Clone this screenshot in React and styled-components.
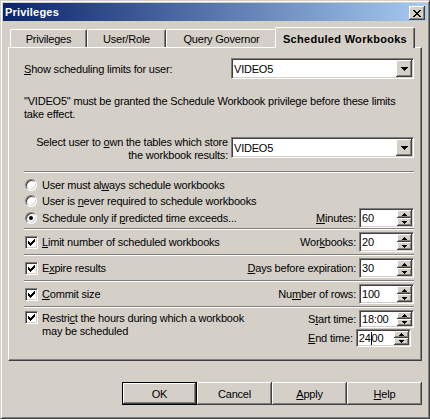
import React from "react";
import styled, { createGlobalStyle, css } from "styled-components";

const Global = createGlobalStyle`
  html, body { margin: 0; padding: 0; background: #d4d0c8; }
  body {
    font-family: "Liberation Sans", Arial, sans-serif;
    font-size: 11px;
    color: #000;
    letter-spacing: -0.2px;
  }
  * { box-sizing: border-box; }
  u { text-underline-offset: 1px; }
`;

const raised = css`
  background: #d4d0c8;
  box-shadow: inset -1px -1px #404040, inset 1px 1px #ffffff,
    inset -2px -2px #808080, inset 2px 2px #d4d0c8;
`;

const sunken = css`
  border: 1px solid;
  border-color: #808080 #ffffff #ffffff #808080;
  box-shadow: inset 1px 1px #404040, inset -1px -1px #d4d0c8;
`;

const Window = styled.div`
  width: 430px;
  height: 419px;
  border: 1px solid;
  border-color: #d4d0c8 #404040 #404040 #d4d0c8;
  box-shadow: inset 1px 1px #ffffff, inset -1px -1px #808080;
  padding: 2px;
  display: flex;
  flex-direction: column;
  background: #d4d0c8;
`;

const TitleBar = styled.div`
  height: 18px;
  flex: none;
  display: flex;
  align-items: flex-start;
  justify-content: space-between;
  background: linear-gradient(to right, #0a246a, #a6caf0);
  padding: 0 2px;
`;

const Title = styled.span`
  color: #fff;
  font-weight: bold;
  letter-spacing: 0.2px;
  line-height: 18px;
`;

const CloseButton = styled.button`
  ${raised}
  border: none;
  padding: 0;
  margin-top: 3px;
  width: 16px;
  height: 14px;
  display: flex;
  align-items: center;
  justify-content: center;
`;

const Body = styled.div`
  padding: 0 5px;
  display: flex;
  flex-direction: column;
`;

const TabStrip = styled.div`
  display: flex;
  align-items: flex-end;
  height: 20px;
  margin-top: 6px;
  padding-left: 2px;
  position: relative;
  z-index: 1;
`;

const Tab = styled.div`
  width: ${(p) => p.$w}px;
  height: ${(p) => (p.$active ? 21 : 18)}px;
  margin-left: ${(p) => (p.$active ? -2 : 0)}px;
  margin-bottom: ${(p) => (p.$active ? -1 : 0)}px;
  padding-top: ${(p) => (p.$active ? 2 : 0)}px;
  background: #d4d0c8;
  border-top: 1px solid #fff;
  border-left: 1px solid #fff;
  border-right: 1px solid #404040;
  box-shadow: inset -1px 0 #808080;
  border-radius: 2px 2px 0 0;
  display: flex;
  align-items: center;
  justify-content: center;
  font-weight: ${(p) => (p.$active ? "bold" : "normal")};
  letter-spacing: ${(p) => (p.$active ? "0.3px" : "-0.2px")};
  white-space: nowrap;
`;

const Panel = styled.div`
  height: 314px;
  border: 1px solid;
  border-color: #fff #404040 #404040 #fff;
  box-shadow: inset -1px -1px #808080;
  padding: 10px 7px 0 15px;
  display: flex;
  flex-direction: column;
`;

const FieldRow = styled.div`
  display: flex;
  align-items: ${(p) => p.$align || "center"};
  justify-content: ${(p) => p.$justify || "space-between"};
  gap: 3px;
  margin-top: ${(p) => p.$mt || 0}px;
`;

const Paragraph = styled.p`
  margin: 16px 0 0;
  line-height: 13px;
  white-space: nowrap;
`;

const RightLabel = styled.div`
  text-align: right;
  line-height: 13px;
  white-space: nowrap;
`;

const ComboBox = styled.div`
  ${sunken}
  width: 183px;
  height: 21px;
  margin-top: ${(p) => p.$mt || 0}px;
  background: #fff;
  display: flex;
  align-items: stretch;
  padding: 1px;
`;

const ComboText = styled.span`
  flex: 1;
  padding-left: 1px;
  display: flex;
  align-items: center;
`;

const ComboArrow = styled.span`
  ${raised}
  width: 16px;
  display: flex;
  align-items: center;
  justify-content: center;
`;

const Separator = styled.div`
  height: 2px;
  flex: none;
  border-top: 1px solid #808080;
  border-bottom: 1px solid #fff;
  margin-top: ${(p) => p.$mt || 0}px;
`;

const OptionRow = styled.div`
  height: ${(p) => p.$h || 16}px;
  margin-top: ${(p) => p.$mt || 0}px;
  display: flex;
  align-items: center;
  justify-content: space-between;
`;

const Option = styled.label`
  display: flex;
  align-items: ${(p) => (p.$top ? "flex-start" : "center")};
  gap: ${(p) => (p.$radio ? 5 : 4)}px;
  padding-left: 1px;
  line-height: 13px;
  white-space: nowrap;
`;

const RadioMark = styled.span`
  width: 12px;
  height: 12px;
  flex: none;
  border-radius: 50%;
  background: #fff;
  border: 1px solid;
  border-color: #808080 #ffffff #ffffff #808080;
  box-shadow: inset 1px 1px #404040, inset -1px -1px #d4d0c8;
  display: flex;
  align-items: center;
  justify-content: center;
  &::after {
    content: "";
    width: 4px;
    height: 4px;
    border-radius: 50%;
    background: ${(p) => (p.$checked ? "#000" : "transparent")};
  }
`;

const CheckMark = styled.span`
  ${sunken}
  width: 13px;
  height: 13px;
  flex: none;
  margin-top: ${(p) => p.$mt || 0}px;
  background: #fff;
  display: flex;
  align-items: center;
  justify-content: center;
`;

const OptionText = styled.span`
  padding-top: ${(p) => p.$pt || 0}px;
`;

const SpinGroup = styled.div`
  display: flex;
  align-items: center;
  gap: 3px;
  white-space: nowrap;
`;

const SpinStack = styled.div`
  display: flex;
  flex-direction: column;
  gap: 1px;
`;

const SpinEdit = styled.div`
  ${sunken}
  width: 55px;
  height: ${(p) => p.$h || 20}px;
  background: #fff;
  display: flex;
  padding: 1px;
`;

const SpinText = styled.span`
  flex: 1;
  padding-left: 1px;
  display: flex;
  align-items: center;
`;

const Caret = styled.span`
  display: inline-block;
  width: 1px;
  height: 13px;
  background: #000;
`;

const SpinButtons = styled.span`
  width: 15px;
  display: flex;
  flex-direction: column;
`;

const SpinButton = styled.span`
  ${raised}
  flex: 1;
  display: flex;
  align-items: center;
  justify-content: center;
`;

const ButtonRow = styled.div`
  display: flex;
  justify-content: flex-end;
  margin-top: 21px;
`;

const DialogButton = styled.button`
  ${raised}
  width: 75px;
  height: 23px;
  padding: 0;
  border: ${(p) => (p.$default ? "1px solid #000" : "none")};
  font: inherit;
  letter-spacing: inherit;
  color: #000;
  display: flex;
  align-items: center;
  justify-content: center;
`;

const Px = ({ cells, w, h }) => (
  <svg width={w} height={h} viewBox={`0 0 ${w} ${h}`} shapeRendering="crispEdges">
    {cells.map(([x, y, cw, ch], i) => (
      <rect key={i} x={x} y={y} width={cw} height={ch} fill="#000" />
    ))}
  </svg>
);

const CloseGlyph = () => (
  <Px
    w={8}
    h={7}
    cells={[
      [0, 0, 2, 1], [6, 0, 2, 1],
      [1, 1, 2, 1], [5, 1, 2, 1],
      [2, 2, 4, 1],
      [3, 3, 2, 1],
      [2, 4, 4, 1],
      [1, 5, 2, 1], [5, 5, 2, 1],
      [0, 6, 2, 1], [6, 6, 2, 1],
    ]}
  />
);

const DownArrow = () => (
  <Px w={7} h={4} cells={[[0, 0, 7, 1], [1, 1, 5, 1], [2, 2, 3, 1], [3, 3, 1, 1]]} />
);

const SmallUp = () => (
  <Px w={5} h={3} cells={[[2, 0, 1, 1], [1, 1, 3, 1], [0, 2, 5, 1]]} />
);

const SmallDown = () => (
  <Px w={5} h={3} cells={[[0, 0, 5, 1], [1, 1, 3, 1], [2, 2, 1, 1]]} />
);

const Tick = () => (
  <Px
    w={7}
    h={7}
    cells={[
      [0, 2, 1, 3], [1, 3, 1, 3], [2, 4, 1, 3], [3, 3, 1, 3],
      [4, 2, 1, 3], [5, 1, 1, 3], [6, 0, 1, 3],
    ]}
  />
);

const Combo = ({ value, mt }) => (
  <ComboBox $mt={mt}>
    <ComboText>{value}</ComboText>
    <ComboArrow>
      <DownArrow />
    </ComboArrow>
  </ComboBox>
);

const Spin = ({ children, h }) => (
  <SpinEdit $h={h}>
    <SpinText>{children}</SpinText>
    <SpinButtons>
      <SpinButton><SmallUp /></SpinButton>
      <SpinButton><SmallDown /></SpinButton>
    </SpinButtons>
  </SpinEdit>
);

const Radio = ({ checked, children }) => (
  <Option $radio>
    <RadioMark $checked={checked} />
    <OptionText>{children}</OptionText>
  </Option>
);

const Check = ({ children }) => (
  <Option>
    <CheckMark><Tick /></CheckMark>
    <OptionText>{children}</OptionText>
  </Option>
);

const tabs = [
  { label: "Privileges", w: 77 },
  { label: "User/Role", w: 79 },
  { label: "Query Governor", w: 111 },
  { label: "Scheduled Workbooks", w: 140, active: true },
];

export default function App() {
  return (
    <>
      <Global />
      <Window>
        <TitleBar>
          <Title>Privileges</Title>
          <CloseButton aria-label="Close">
            <CloseGlyph />
          </CloseButton>
        </TitleBar>
        <Body>
          <TabStrip>
            {tabs.map((t) => (
              <Tab key={t.label} $w={t.w} $active={t.active}>
                {t.label}
              </Tab>
            ))}
          </TabStrip>
          <Panel>
            <FieldRow>
              <span>
                <u>S</u>how scheduling limits for user:
              </span>
              <Combo value="VIDEO5" />
            </FieldRow>
            <Paragraph>
              "VIDEO5" must be granted the Schedule Workbook privilege before these limits
              <br />
              take effect.
            </Paragraph>
            <FieldRow $align="flex-start" $justify="flex-end" $mt={15}>
              <RightLabel>
                Select user to <u>o</u>wn the tables which store
                <br />
                the workbook results:
              </RightLabel>
              <Combo value="VIDEO5" mt={1} />
            </FieldRow>
            <Separator $mt={9} />
            <OptionRow $mt={4}>
              <Radio>
                User must al<u>w</u>ays schedule workbooks
              </Radio>
            </OptionRow>
            <OptionRow>
              <Radio>
                User is <u>n</u>ever required to schedule workbooks
              </Radio>
            </OptionRow>
            <OptionRow $h={20} $mt={-1}>
              <Radio checked>
                Schedule only if <u>p</u>redicted time exceeds...
              </Radio>
              <SpinGroup>
                <span>
                  <u>M</u>inutes:
                </span>
                <Spin>60</Spin>
              </SpinGroup>
            </OptionRow>
            <Separator />
            <OptionRow $h={20} $mt={2}>
              <Check>
                <u>L</u>imit number of scheduled workbooks
              </Check>
              <SpinGroup>
                <span>
                  Wor<u>k</u>books:
                </span>
                <Spin>20</Spin>
              </SpinGroup>
            </OptionRow>
            <Separator $mt={2} />
            <OptionRow $h={20} $mt={2}>
              <Check>
                E<u>x</u>pire results
              </Check>
              <SpinGroup>
                <span>
                  <u>D</u>ays before expiration:
                </span>
                <Spin>30</Spin>
              </SpinGroup>
            </OptionRow>
            <Separator $mt={2} />
            <OptionRow $h={20} $mt={2}>
              <Check>
                <u>C</u>ommit size
              </Check>
              <SpinGroup>
                <span>
                  Nu<u>m</u>ber of rows:
                </span>
                <Spin>100</Spin>
              </SpinGroup>
            </OptionRow>
            <Separator $mt={2} />
            <FieldRow $align="flex-start" $mt={2}>
              <Option $top>
                <CheckMark $mt={1}><Tick /></CheckMark>
                <OptionText $pt={2}>
                  Restri<u>c</u>t the hours during which a workbook
                  <br />
                  may be scheduled
                </OptionText>
              </Option>
              <SpinStack>
                <SpinGroup>
                  <span>
                    S<u>t</u>art time:
                  </span>
                  <Spin h={18}>18:00</Spin>
                </SpinGroup>
                <SpinGroup>
                  <span>
                    <u>E</u>nd time:
                  </span>
                  <Spin h={18}>
                    24<Caret />00
                  </Spin>
                </SpinGroup>
              </SpinStack>
            </FieldRow>
          </Panel>
          <ButtonRow>
            <DialogButton $default>OK</DialogButton>
            <DialogButton>Cancel</DialogButton>
            <DialogButton>
              <u>A</u>pply
            </DialogButton>
            <DialogButton>
              <u>H</u>elp
            </DialogButton>
          </ButtonRow>
        </Body>
      </Window>
    </>
  );
}
